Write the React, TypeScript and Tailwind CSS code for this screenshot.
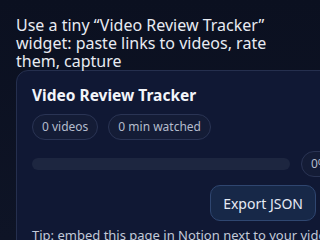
import React from 'react';

function Chip({ label }: { label: string }) {
    return (
        <span className="shrink-0 rounded-full border border-[#2a3454] bg-[#141c36] px-[9px] h-[26px] flex items-center text-[12px] text-[#b4bccd]">
            {label}
        </span>
    );
}

function App() {
    return (
        <div className="w-[320px] h-[240px] overflow-hidden bg-gradient-to-b from-[#0b1020] to-[#0e1426] font-['Noto_Sans',sans-serif]">
            <p className="pt-[16px] px-[16px] text-[16px] leading-[18px] text-[#e8ebf2] w-[300px]">
                Use a tiny “Video Review Tracker” widget: paste links to videos, rate them, capture
            </p>

            <div className="ml-[16px] w-[316px] rounded-[12px] border border-[#252f4e] bg-[#101834] px-[15px] pt-[12px] pb-[16px]">
                <h2 className="text-[15.5px] font-bold text-[#f3f5fa] leading-[24px]">Video Review Tracker</h2>

                <div className="mt-[7px] flex gap-[10px]">
                    <Chip label="0 videos" />
                    <Chip label="0 min watched" />
                </div>

                <div className="mt-[11px] flex items-center gap-[11px] w-[340px]">
                    <div className="w-[258px] h-[12px] rounded-full bg-[#1d2640]" />
                    <Chip label="0%" />
                </div>

                <div className="mt-[8px] flex justify-end">
                    <button className="h-[36px] px-[12px] rounded-[10px] border border-[#2f4670] bg-[#172848] text-[14px] text-[#e6ebf5]">
                        Export JSON
                    </button>
                </div>

                <p className="mt-[5px] text-[13px] text-[#c2c9d8] whitespace-nowrap">
                    Tip: embed this page in Notion next to your video links.
                </p>
            </div>
        </div>
    );
}

export default App;
